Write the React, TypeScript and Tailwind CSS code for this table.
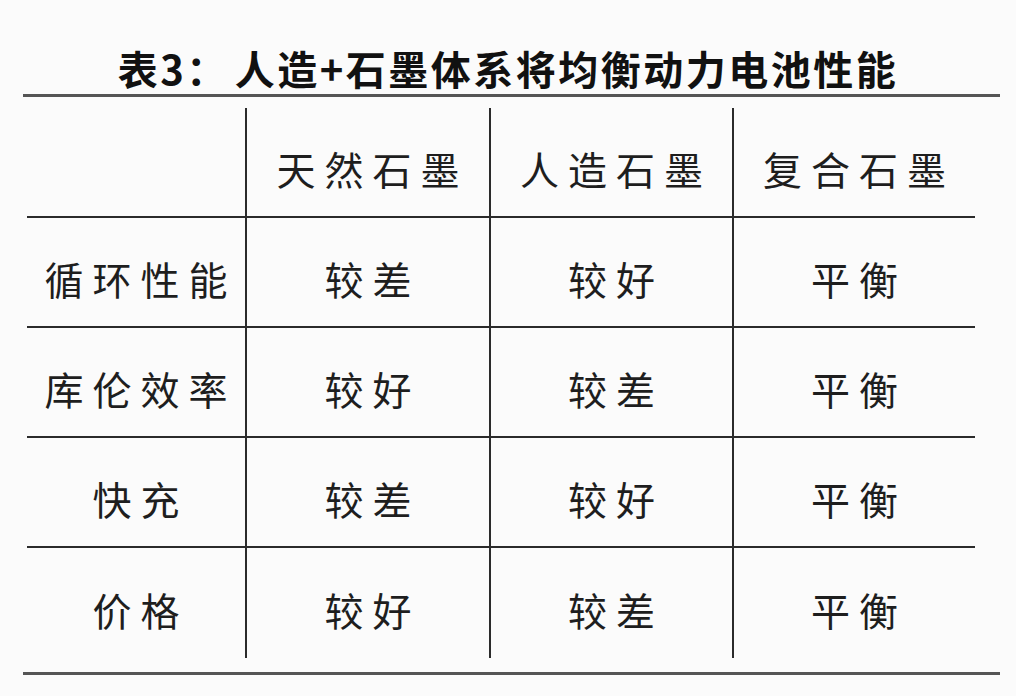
import React from 'react';

const headers = ['天然石墨', '人造石墨', '复合石墨'];

const rows = [
  { label: '循环性能', values: ['较差', '较好', '平衡'] },
  { label: '库伦效率', values: ['较好', '较差', '平衡'] },
  { label: '快充', values: ['较差', '较好', '平衡'] },
  { label: '价格', values: ['较好', '较差', '平衡'] },
];

const cellText =
  "text-[39px] leading-none tracking-[9px] pl-[9px] pt-[12px] font-normal text-[#1e1e1e]";

const App = () => {
  const allRows = [{ label: '', values: headers }, ...rows];

  return (
    <div
      className="w-[1016px] h-[696px] bg-[#fbfbfb] overflow-hidden"
      style={{ fontFamily: '"Noto Sans CJK SC", "Noto Sans", sans-serif' }}
    >
      {/* Title */}
      <div className="pt-[47px] h-[94px] text-center text-[40px] leading-[42px] font-bold tracking-[2.5px] text-[#111]">
        表3：<span className="ml-[6px]">人造+石墨体系将均衡动力电池性能</span>
      </div>

      {/* Top rule */}
      <div className="ml-[23px] w-[977px] h-[3px] bg-[#555]" />

      {/* Table */}
      <div className="ml-[27px] mt-[11px] w-[948px] grid grid-cols-[218px_244px_243px_243px]">
        {allRows.map((row, r) => {
          const last = r === allRows.length - 1;
          return (
            <React.Fragment key={r}>
              <div
                className={`h-[110px] flex items-center justify-center ${last ? '' : 'border-b-2 border-[#2b2b2b]'}`}
              >
                <span className={cellText}>{row.label}</span>
              </div>
              {row.values.map((v, c) => (
                <div
                  key={c}
                  className={`h-[110px] flex items-center justify-center border-l-2 border-[#2b2b2b] ${last ? '' : 'border-b-2'}`}
                >
                  <span className={cellText}>{v}</span>
                </div>
              ))}
            </React.Fragment>
          );
        })}
      </div>

      {/* Bottom rule */}
      <div className="ml-[23px] mt-[14px] w-[977px] h-[3px] bg-[#555]" />
    </div>
  );
};

export default App;
